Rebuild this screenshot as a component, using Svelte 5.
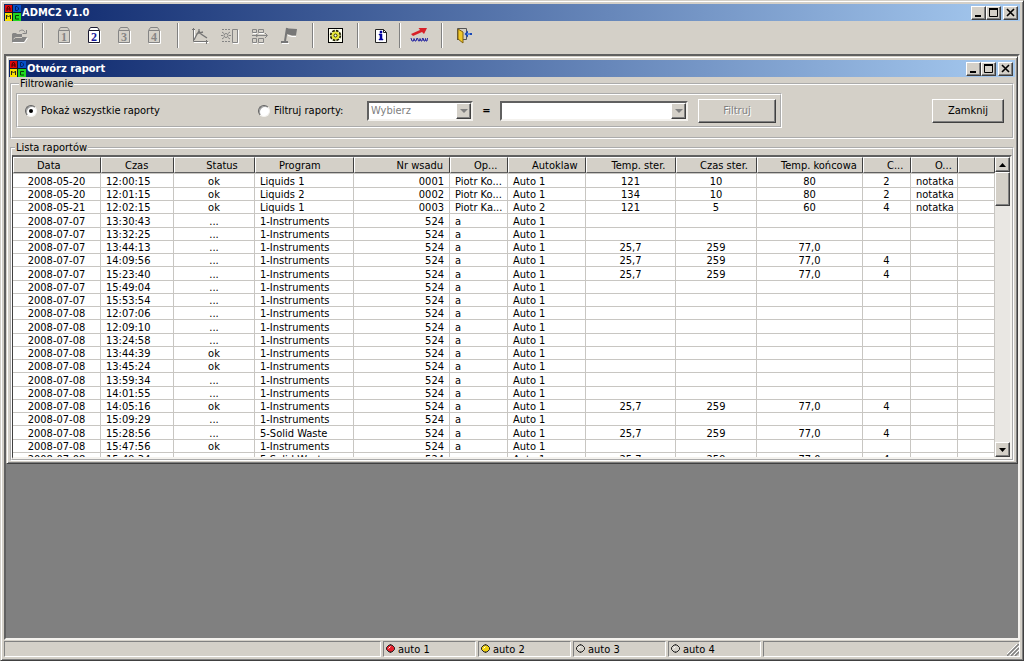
<script lang="ts">
	interface Column {
		label: string;
		width: number | null;
		head: string;
		body: string;
	}

	const columns: Column[] = [
		{ label: 'Data', width: 88, head: 'left', body: 'center' },
		{ label: 'Czas', width: 73, head: 'left', body: 'left' },
		{ label: 'Status', width: 81, head: 'center', body: 'center' },
		{ label: 'Program', width: 99, head: 'left', body: 'left' },
		{ label: 'Nr wsadu', width: 96, head: 'right', body: 'right' },
		{ label: 'Op...', width: 58, head: 'left', body: 'left' },
		{ label: 'Autoklaw', width: 78, head: 'left', body: 'left' },
		{ label: 'Temp. ster.', width: 90, head: 'center', body: 'center' },
		{ label: 'Czas ster.', width: 81, head: 'center', body: 'center' },
		{ label: 'Temp. końcowa', width: 106, head: 'center', body: 'center' },
		{ label: 'C...', width: 48, head: 'left', body: 'center' },
		{ label: 'O...', width: 47, head: 'left', body: 'left' },
		{ label: '', width: null, head: 'left', body: 'left' },
	];

	function entry(date: string, time: string, status = '...', program = '1-Instruments', measured = false) {
		const values = measured ? ['25,7', '259', '77,0', '4'] : ['', '', '', ''];
		return [date, time, status, program, '524', 'a', 'Auto 1', ...values, '', ''];
	}

	const rows: string[][] = [
		['2008-05-20', '12:00:15', 'ok', 'Liquids 1', '0001', 'Piotr Ko...', 'Auto 1', '121', '10', '80', '2', 'notatka', ''],
		['2008-05-20', '12:01:15', 'ok', 'Liquids 2', '0002', 'Piotr Ko...', 'Auto 1', '134', '10', '80', '2', 'notatka', ''],
		['2008-05-21', '12:02:15', 'ok', 'Liquids 1', '0003', 'Piotr Ka...', 'Auto 2', '121', '5', '60', '4', 'notatka', ''],
		entry('2008-07-07', '13:30:43'),
		entry('2008-07-07', '13:32:25'),
		['2008-07-07', '13:44:13', '...', '1-Instruments', '524', 'a', 'Auto 1', '25,7', '259', '77,0', '', '', ''],
		entry('2008-07-07', '14:09:56', '...', '1-Instruments', true),
		entry('2008-07-07', '15:23:40', '...', '1-Instruments', true),
		entry('2008-07-07', '15:49:04'),
		entry('2008-07-07', '15:53:54'),
		entry('2008-07-08', '12:07:06'),
		entry('2008-07-08', '12:09:10'),
		entry('2008-07-08', '13:24:58'),
		entry('2008-07-08', '13:44:39', 'ok'),
		entry('2008-07-08', '13:45:24', 'ok'),
		entry('2008-07-08', '13:59:34'),
		entry('2008-07-08', '14:01:55'),
		entry('2008-07-08', '14:05:16', 'ok', '1-Instruments', true),
		entry('2008-07-08', '15:09:29'),
		entry('2008-07-08', '15:28:56', '...', '5-Solid Waste', true),
		entry('2008-07-08', '15:47:56', 'ok'),
		entry('2008-07-08', '15:49:34', '...', '5-Solid Waste', true),
	];

	const lamps = [
		{ name: 'auto 1', color: '#e8202c' },
		{ name: 'auto 2', color: '#f0d010' },
		{ name: 'auto 3', color: '#d4d0c8' },
		{ name: 'auto 4', color: '#d4d0c8' },
	];

	let mode = $state<'all' | 'filter'>('all');
	let selected = $state(2);
	let filtering = $derived(mode === 'filter');
</script>

{#snippet logo()}
	<svg class="logo" width="16" height="16" viewBox="0 0 16 16" aria-hidden="true">
		<rect width="16" height="16" fill="#101828" />
		<rect width="7" height="7" fill="#e00808" />
		<rect x="8" width="8" height="7" fill="#0850c8" />
		<rect y="8" width="7" height="8" fill="#f8e000" />
		<rect x="8" y="8" width="8" height="8" fill="#20d820" />
		<path d="M2 6V3L3.500 1L5 3V6M2 4H5" fill="none" stroke="#400" />
		<path d="M10.500 1.500H12L13.500 3V4.500L12 5.500H10.500Z" fill="none" stroke="#002060" />
		<path d="M1.500 14V10L3.500 12L5.500 10V14" fill="none" stroke="#222" />
		<path d="M14 10.500H10.500V14H14" fill="none" stroke="#064006" />
	</svg>
{/snippet}

{#snippet titlebar(title: string)}
	<header class="titlebar">
		{@render logo()}
		<h1>{title}</h1>
		<button type="button" aria-label="Minimalizuj">
			<svg width="12" height="11" viewBox="0 0 12 11"><path d="M3 9H9" stroke="#000" stroke-width="2" /></svg>
		</button>
		<button type="button" aria-label="Maksymalizuj">
			<svg width="12" height="11" viewBox="0 0 12 11"><path d="M2.500 1V9.500H10.500V1" fill="none" stroke="#000" /><path d="M2 2H11" stroke="#000" stroke-width="2" /></svg>
		</button>
		<button type="button" class="close" aria-label="Zamknij okno">
			<svg width="12" height="11" viewBox="0 0 12 11"><path d="M3 2L10 9M10 2L3 9" stroke="#000" stroke-width="1.600" /></svg>
		</button>
	</header>
{/snippet}

<div class="window">
	{@render titlebar('ADMC2 v1.0')}

	<nav class="toolbar">
		<button type="button" aria-label="Otwórz">
			<svg width="20" height="20" viewBox="0 0 20 20">
				<path d="M2 16V8L3 7H6L7 8H12V11H17L14 16Z" fill="#858585" />
				<path d="M3.500 13L5.500 11.500H12" fill="none" stroke="#d4d0c8" />
				<path d="M9 5.500C11 3.500 14 3.500 15 6.500M16.500 4V7.500H12.500" fill="none" stroke="#858585" />
				<path d="M3 16.500H14.500L17.500 12" fill="none" stroke="#fff" />
			</svg>
		</button>
		<span class="sep"></span>
		{#each [1, 2, 3, 4] as n}
			<button type="button" class="device" class:selected={selected === n} onclick={() => (selected = n)} aria-label="Autoklaw {n}">
				<svg width="20" height="20" viewBox="0 0 20 20">
					<path d="M4 17.500H15.500V5" fill="none" stroke="#fff" />
					<path class="frame" d="M3.500 4.500L5.500 1.500H12.500L14.500 4.500V16.500H3.500Z" />
					<path class="frame" d="M4 4.500H14" />
					<text x="9" y="15">{n}</text>
				</svg>
			</button>
		{/each}
		<span class="sep"></span>
		<button type="button" aria-label="Wykres">
			<svg width="20" height="20" viewBox="0 0 20 20" fill="none" stroke="#747474">
				<path d="M4 16.500H19M4.500 4V14" stroke="#fff" />
				<path d="M3.500 2V15.500H18M2 3.500H5M16.500 14V18" />
				<path d="M4 14L6 10L9 5L11 8L17 12M6 8L9 7L13 6M9 3V6" stroke-width="1.300" />
			</svg>
		</button>
		<button type="button" aria-label="Sterylizacja">
			<svg width="20" height="20" viewBox="0 0 20 20" fill="none" stroke="#858585">
				<path d="M18.500 4V17.500H13" stroke="#fff" />
				<path d="M12.500 3.500H17.500V16.500H12.500Z" />
				<circle cx="6" cy="9.500" r="2" />
				<path d="M2 3.500H4M5 3.500H7M8 3.500H10M2 15.500H4M5 15.500H7M8 15.500H10M1 9.500H3M9 9.500H11M2 6L4 7.500M10 6L8 7.500M2 13L4 11.500M10 13L8 11.500" />
			</svg>
		</button>
		<button type="button" aria-label="Schemat">
			<svg width="20" height="20" viewBox="0 0 20 20" fill="none" stroke="#858585">
				<path d="M3 7.500H7M9 7.500H14M3 17.500H7M9 17.500H14" stroke="#fff" />
				<path d="M2.500 3.500H6.500V6.500H2.500ZM8.500 3.500H13.500V6.500H8.500ZM2.500 12.500H6.500V16.500H2.500ZM8.500 12.500H13.500V16.500H8.500Z" />
				<path d="M2 9.500H17M15 7L17.500 9.500L15 12M6 8L8 9.500L6 11" />
			</svg>
		</button>
		<button type="button" aria-label="Flaga">
			<svg width="20" height="20" viewBox="0 0 20 20">
				<path d="M6 2L9 2.500L17 3L16 9.500H12L7 8Z" fill="#777" />
				<path d="M7 2L5 15M1 16H8" fill="none" stroke="#777" stroke-width="2" />
				<path d="M2 17.500H9M8 9.500L12 10.500H16" fill="none" stroke="#fff" />
			</svg>
		</button>
		<span class="sep"></span>
		<button type="button" aria-label="Ustawienia">
			<svg width="20" height="20" viewBox="0 0 20 20">
				<rect x="3.500" y="2.500" width="14" height="14" fill="#fffff0" stroke="#000" />
				<circle cx="10.500" cy="9.500" r="4.500" fill="none" stroke="#202000" stroke-width="2.500" stroke-dasharray="2.500 1" />
				<circle cx="10.500" cy="9.500" r="4" fill="#e8e838" />
				<circle cx="10.500" cy="9.500" r="1.500" fill="#fff" stroke="#303000" />
			</svg>
		</button>
		<span class="sep"></span>
		<button type="button" aria-label="Informacje">
			<svg width="20" height="20" viewBox="0 0 20 20">
				<path d="M5.500 3.500H13.500L16.500 6.500V16.500H5.500Z" fill="#fff" stroke="#222" />
				<path d="M13.500 3.500V6.500H16.500" fill="none" stroke="#222" />
				<path d="M10 5H12V7H10ZM9 8H12V13H13V14H9V13H10V9H9Z" fill="#0000a0" stroke="#0000a0" stroke-width=".5" />
			</svg>
		</button>
		<span class="sep narrow"></span>
		<button type="button" aria-label="Strona www">
			<svg width="20" height="20" viewBox="0 0 20 20">
				<path d="M2 8L11 4L9.500 2H18L15 8L13 6L4 10Z" fill="#d82028" />
				<path d="M2 12L3 15H4.500L5 12.500L6 15H7L8 12M8.500 12L9.500 15H10.500L11 12.500L12 15H13L13.500 12M14 12L15 15H16L16.500 12.500L17 15H18L18.500 12" fill="none" stroke="#2020a0" />
			</svg>
		</button>
		<span class="sep"></span>
		<button type="button" aria-label="Wyjście">
			<svg width="20" height="20" viewBox="0 0 20 20">
				<path d="M3.500 14V2.500H12.500V13.500H3" fill="#d4d0c8" stroke="#555" />
				<path d="M4 3L9 6V17L4 13Z" fill="#f0c828" stroke="#806010" />
				<path d="M10.500 8L14 4.500V7H18V9H14V11.500Z" fill="#1848b8" />
				<path d="M13 8H16" stroke="#a0c8ff" />
			</svg>
		</button>
	</nav>

	<main class="workspace">
		<section class="child">
			{@render titlebar('Otwórz raport')}

			<fieldset class="filters">
				<legend>Filtrowanie</legend>
				<div class="filter-row">
					<div class="filter-panel">
						<label class="radio all">
							<input type="radio" name="mode" value="all" bind:group={mode} />
							Pokaż wszystkie raporty
						</label>
						<label class="radio some">
							<input type="radio" name="mode" value="filter" bind:group={mode} />
							Filtruj raporty:
						</label>
						<span class="combo field">
							<select aria-label="Pole filtra" disabled={!filtering}>
								<option>Wybierz</option>
							</select>
							<span class="arrow"></span>
						</span>
						<span class="equals">=</span>
						<span class="combo value">
							<select aria-label="Wartość filtra" disabled={!filtering}>
								<option></option>
							</select>
							<span class="arrow"></span>
						</span>
						<button type="button" class="push apply" disabled={!filtering}>Filtruj</button>
					</div>
					<button type="button" class="push done">Zamknij</button>
				</div>
			</fieldset>

			<fieldset class="reports">
				<legend>Lista raportów</legend>
				<div class="list">
					<div class="table-wrap">
						<table>
							<colgroup>
								{#each columns as column}
									<col style:width={column.width ? `${column.width}px` : null} />
								{/each}
							</colgroup>
							<thead>
								<tr>
									{#each columns as column}
										<th class={column.head}>{column.label}</th>
									{/each}
								</tr>
							</thead>
							<tbody>
								{#each rows as row}
									<tr>
										{#each row as cell, i}
											<td class={columns[i].body}>{cell}</td>
										{/each}
									</tr>
								{/each}
							</tbody>
						</table>
					</div>
					<div class="scrollbar">
						<button type="button" aria-label="W górę">
							<svg width="7" height="4" viewBox="0 0 7 4"><path d="M0 4L3.500 0L7 4Z" /></svg>
						</button>
						<div class="thumb"></div>
						<button type="button" class="down" aria-label="W dół">
							<svg width="7" height="4" viewBox="0 0 7 4"><path d="M0 0L3.500 4L7 0Z" /></svg>
						</button>
					</div>
				</div>
			</fieldset>
		</section>
	</main>

	<footer class="statusbar">
		<div class="pane first"></div>
		{#each lamps as lamp}
			<div class="pane lamp">
				<svg width="10" height="10" viewBox="0 0 10 10" aria-hidden="true">
					<path d="M4.500 .5L8.500 4.500L4.500 8.500L.5 4.500Z" fill={lamp.color} stroke="#222" stroke-linejoin="round" />
					<path d="M3 1H6L8.500 3.500V5.500L6 8H3L.5 5.500V3.500Z" fill={lamp.color} stroke="#222" />
					<path d="M2.500 4.500L4.500 2.500" stroke="#fff" />
				</svg>
				{lamp.name}
			</div>
		{/each}
		<div class="pane last">
			<svg width="12" height="12" viewBox="0 0 12 12" aria-hidden="true">
				<path d="M0 12L12 0M4 12L12 4M8 12L12 8" stroke="#808080" stroke-width="1.500" />
				<path d="M-1 11L11 -1M3 11L12 2M7 11L12 6" stroke="#fff" />
			</svg>
		</div>
	</footer>
</div>

<style>
	:global(body) {
		margin: 0;
		background: #d4d0c8;
	}
	.window, .window * {
		box-sizing: border-box;
	}
	.window {
		display: flex;
		flex-direction: column;
		min-height: 100vh;
		padding: 3px;
		background: #d4d0c8;
		border: 1px solid;
		border-color: #d4d0c8 #404040 #404040 #d4d0c8;
		box-shadow: inset 1px 1px #fff, inset -1px -1px #808080;
		font-family: Tahoma, "DejaVu Sans Condensed", "DejaVu Sans", sans-serif;
		font-size: 11px;
		line-height: 13px;
		color: #000;
	}
	button, select {
		font: inherit;
		color: inherit;
		padding: 0;
	}
	.titlebar {
		display: flex;
		align-items: center;
		height: 17px;
		padding-right: 2px;
		background: linear-gradient(to right, #0a246a, #a6caf0);
	}
	.logo {
		margin: 0 1px;
	}
	h1 {
		flex: 1;
		margin: 0;
		font-size: 11px;
		font-weight: bold;
		color: #fff;
	}
	.titlebar button, .scrollbar button, .thumb, .push, .arrow {
		background: #d4d0c8;
		border: 1px solid;
		border-color: #fff #404040 #404040 #fff;
		box-shadow: inset -1px -1px #808080;
	}
	.titlebar button {
		display: flex;
		width: 15px;
		height: 14px;
	}
	.titlebar .close {
		margin-left: 2px;
	}
	.toolbar {
		display: flex;
		align-items: center;
		height: 33px;
		padding: 0 1px 4px;
	}
	.toolbar button {
		display: flex;
		justify-content: center;
		width: 30px;
		background: none;
		border: none;
	}
	.sep {
		display: flex;
		justify-content: center;
		width: 15px;
		height: 25px;
	}
	.sep::before {
		content: '';
		border-left: 1px solid #808080;
		border-right: 1px solid #fff;
	}
	.narrow {
		width: 9px;
	}
	.frame {
		fill: none;
		stroke: #858585;
	}
	.device text {
		fill: #858585;
		font: bold 12px "Liberation Serif", serif;
		text-anchor: middle;
	}
	.device.selected .frame {
		fill: #fff;
		stroke: #181830;
	}
	.device.selected text {
		fill: #1818a0;
	}
	.workspace {
		flex: 1;
		background: #808080;
		border: 2px solid;
		border-color: #606060 #f4f2ee #f4f2ee #606060;
	}
	.child {
		padding: 3px 2px 2px;
		background: #d4d0c8;
		border: 1px solid;
		border-color: #d4d0c8 #404040 #404040 #d4d0c8;
		box-shadow: inset 1px 1px #fff, inset -1px -1px #808080;
	}
	fieldset {
		min-width: 0;
		margin: 0 1px;
		padding: 0;
		border: 2px groove #fff;
	}
	legend {
		margin-left: 3px;
		padding: 0 1px;
		line-height: 13px;
	}
	.filters {
		padding: 3px 8px 9px 4px;
	}
	.filter-row {
		display: flex;
		align-items: center;
		justify-content: space-between;
	}
	.filter-panel {
		display: flex;
		align-items: center;
		height: 35px;
		padding: 0 4px 0 7px;
		border: 2px groove #fff;
	}
	.radio {
		display: flex;
		align-items: center;
		gap: 4px;
		white-space: nowrap;
	}
	.radio input {
		appearance: none;
		display: grid;
		place-items: center;
		width: 12px;
		height: 12px;
		margin: 0;
		background: #fff;
		border: 1px solid;
		border-color: #606060 #f4f2ee #f4f2ee #606060;
		border-radius: 50%;
		box-shadow: inset 1px 1px #a0a0a0;
	}
	.radio input:checked::before {
		content: '';
		width: 4px;
		height: 4px;
		background: #000;
		border-radius: 50%;
	}
	.all {
		width: 233px;
	}
	.some {
		width: 109px;
	}
	.combo {
		position: relative;
		height: 20px;
	}
	.combo select {
		appearance: none;
		display: block;
		width: 100%;
		height: 20px;
		padding-left: 2px;
		background: #fff;
		border: 2px solid;
		border-color: #606060 #f4f2ee #f4f2ee #606060;
		border-radius: 0;
		opacity: 1;
	}
	.combo select:disabled {
		color: #808080;
	}
	.arrow {
		position: absolute;
		top: 2px;
		right: 2px;
		bottom: 2px;
		display: grid;
		place-items: center;
		width: 15px;
		pointer-events: none;
	}
	.arrow::before {
		content: '';
		border: 4px solid transparent;
		border-top-color: #808080;
		border-bottom: none;
	}
	.field {
		width: 106px;
	}
	.value {
		width: 188px;
	}
	.equals {
		width: 27px;
		text-align: center;
		font-weight: bold;
	}
	.push {
		height: 24px;
	}
	.push:disabled {
		color: #808080;
		text-shadow: 1px 1px #fff;
	}
	.apply {
		width: 78px;
		margin-left: 10px;
	}
	.done {
		width: 72px;
	}
	.reports {
		margin-top: 2px;
		padding-top: 1px;
	}
	.list {
		display: flex;
		height: 304px;
		background: #fff;
		border: 2px solid;
		border-color: #606060 #f4f2ee #f4f2ee #404040;
		border-left-width: 1px;
	}
	.table-wrap {
		flex: 1;
		min-width: 0;
		overflow: hidden;
	}
	table {
		width: 100%;
		table-layout: fixed;
		border-collapse: separate;
		border-spacing: 0;
	}
	th, td {
		padding: 0 5px;
		white-space: nowrap;
	}
	th {
		height: 16px;
		padding: 0 0 0 23px;
		font-weight: normal;
		background: #d4d0c8;
		border: 1px solid;
		border-color: #fff #404040 #606060 #fff;
	}
	th.center {
		padding-right: 8px;
	}
	th.right {
		padding-right: 6px;
	}
	td {
		height: 13px;
		padding-top: 2px;
		line-height: 10px;
		border-right: 1px solid #c8c6c2;
		border-bottom: 1px solid #c8c6c2;
	}
	tr:nth-child(4n) td {
		height: 14px;
	}
	tbody tr:first-child td {
		height: 15px;
		border-top: 1px solid #c8c6c2;
	}
	.left {
		text-align: left;
	}
	.center {
		text-align: center;
	}
	.right {
		text-align: right;
	}
	.scrollbar {
		display: flex;
		flex-direction: column;
		width: 15px;
		background: #e9e7e3;
	}
	.scrollbar button {
		display: grid;
		place-items: center;
		height: 15px;
	}
	.thumb {
		height: 34px;
	}
	.down {
		margin-top: auto;
	}
	.statusbar {
		display: flex;
		gap: 2px;
		height: 17px;
		padding-top: 1px;
	}
	.pane {
		display: flex;
		align-items: center;
		gap: 2px;
		padding-left: 2px;
		border: 1px solid;
		border-color: #808080 #fff #fff #808080;
	}
	.first {
		width: 377px;
	}
	.lamp {
		width: 93px;
	}
	.last {
		flex: 1;
		justify-content: flex-end;
		align-items: flex-end;
	}
</style>
